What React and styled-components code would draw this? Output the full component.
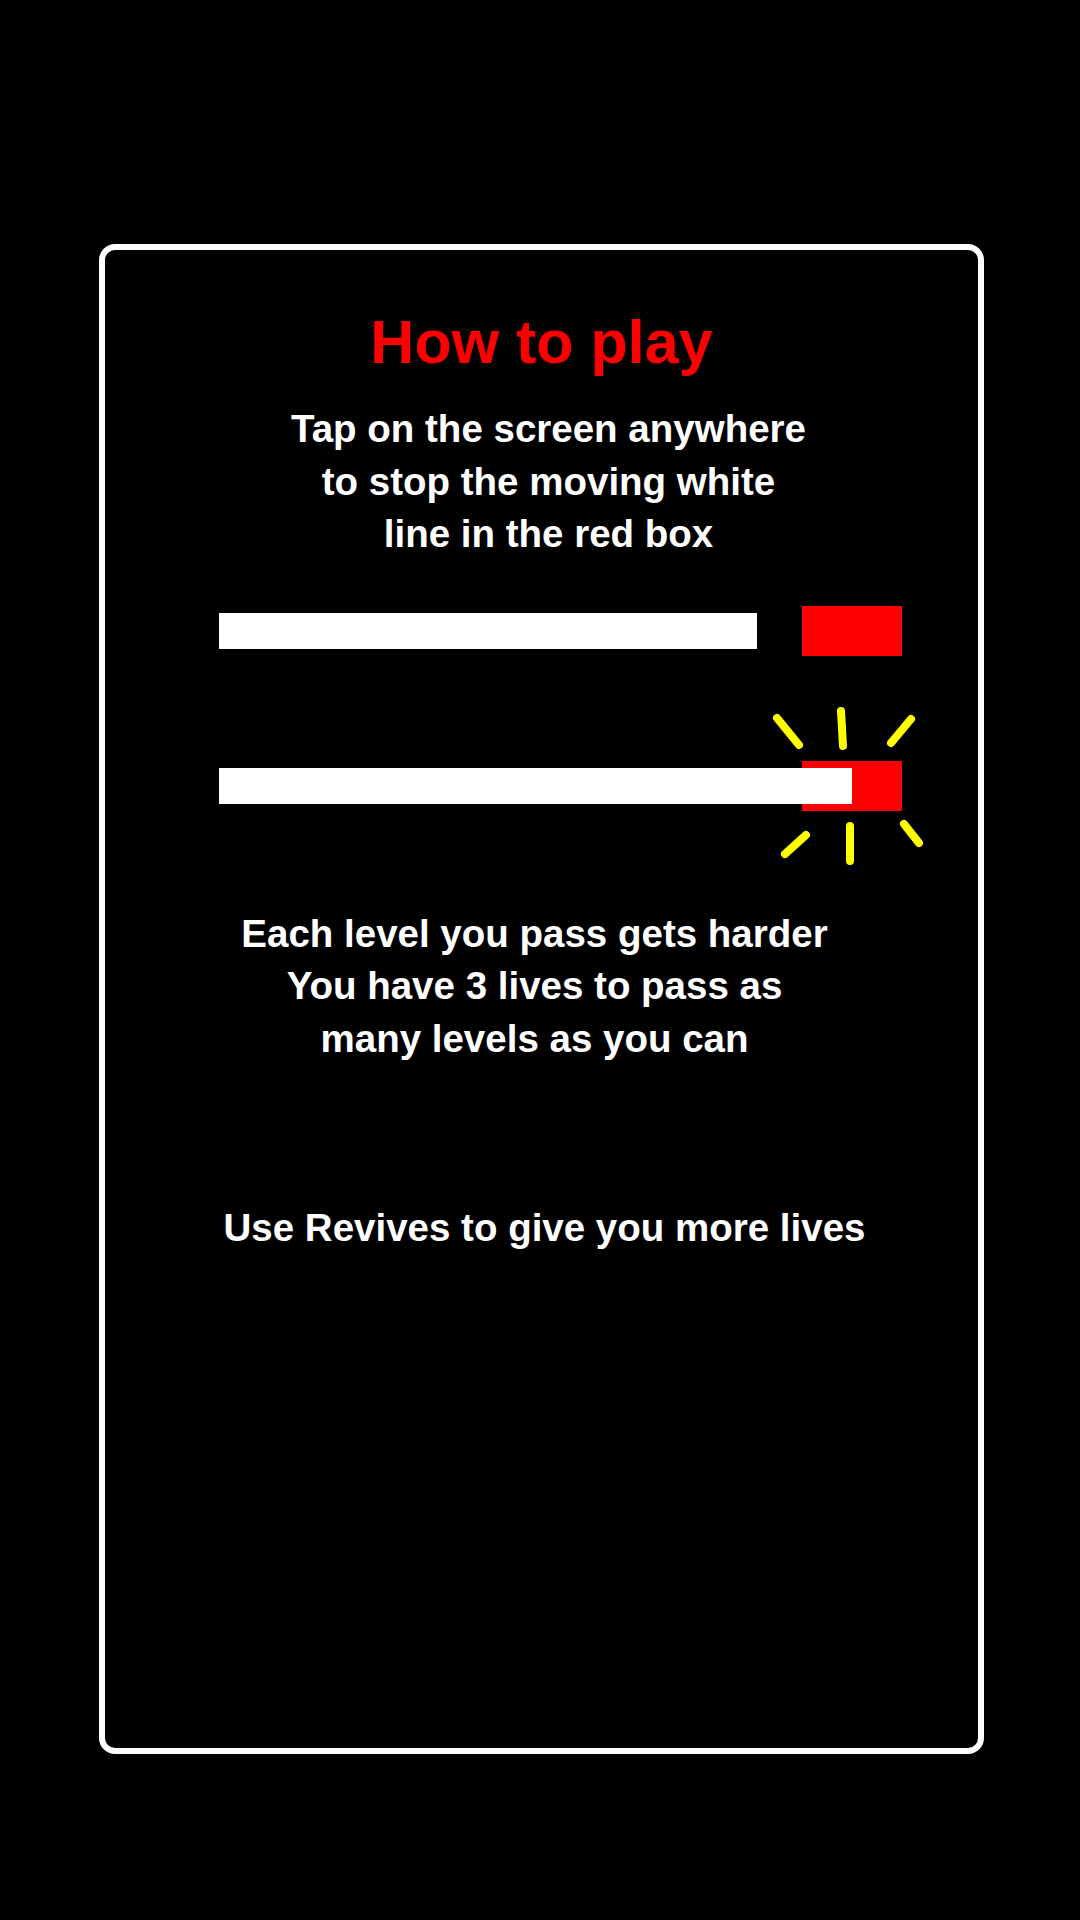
import React from "react";
import styled, { createGlobalStyle } from "styled-components";

const GlobalStyle = createGlobalStyle`
  html, body {
    margin: 0;
    padding: 0;
    background: #000000;
  }
  body {
    font-family: "Liberation Sans", Arial, sans-serif;
  }
`;

const Page = styled.main`
  width: 1080px;
  height: 1920px;
  box-sizing: border-box;
  padding: 244px 96px 0 99px;
  background: #000000;
`;

const Card = styled.section`
  box-sizing: border-box;
  width: 885px;
  height: 1510px;
  border: 6px solid #ffffff;
  border-radius: 16px;
  display: flex;
  flex-direction: column;
  padding-top: 57px;
`;

const Title = styled.h1`
  margin: 0;
  font-family: "Liberation Sans", Arial, sans-serif;
  font-weight: 700;
  font-size: 61px;
  line-height: 70px;
  color: #ff0000;
  text-align: center;
`;

const Body = styled.p`
  margin: ${(p) => p.$top}px 0 0;
  padding-left: ${(p) => Math.max(0, p.$offset * 2)}px;
  padding-right: ${(p) => Math.max(0, -p.$offset * 2)}px;
  font-family: "Liberation Sans", Arial, sans-serif;
  font-weight: 700;
  font-size: 38.5px;
  line-height: 52.5px;
  color: #ffffff;
  text-align: center;
`;

const Track = styled.div`
  position: relative;
  display: grid;
  grid-template-areas: "cell";
  align-items: center;
  width: 683px;
  height: 50px;
  margin: ${(p) => p.$top}px 0 0 114px;
`;

const Target = styled.div`
  grid-area: cell;
  justify-self: end;
  width: 100px;
  height: 50px;
  background: #ff0000;
`;

const Line = styled.div`
  grid-area: cell;
  justify-self: start;
  height: 36px;
  background: #ffffff;
`;

const Sparks = styled.svg`
  position: absolute;
  left: 551px;
  top: -56px;
  width: 160px;
  height: 165px;
  overflow: visible;
  pointer-events: none;
`;

const sparkLines = [
  [7, 13, 29, 40],
  [71, 6, 73, 41],
  [141, 14, 121, 38],
  [36, 130, 15, 149],
  [80, 121, 80, 156],
  [134, 119, 149, 138],
];

function Burst() {
  return (
    <Sparks viewBox="0 0 160 165">
      {sparkLines.map(([x1, y1, x2, y2], i) => (
        <line
          key={i}
          x1={x1}
          y1={y1}
          x2={x2}
          y2={y2}
          stroke="#ffff00"
          strokeWidth="8"
          strokeLinecap="round"
        />
      ))}
    </Sparks>
  );
}

export default function App() {
  return (
    <>
      <GlobalStyle />
      <Page>
        <Card>
          <Title>How to play</Title>
          <Body $top={26} $offset={7}>
            Tap on the screen anywhere
            <br />
            to stop the moving white
            <br />
            line in the red box
          </Body>
          <Track $top={45}>
            <Target />
            <Line style={{ width: 538 }} />
          </Track>
          <Track $top={105}>
            <Target />
            <Line style={{ width: 633 }} />
            <Burst />
          </Track>
          <Body $top={97} $offset={-7}>
            Each level you pass gets harder
            <br />
            You have 3 lives to pass as
            <br />
            many levels as you can
          </Body>
          <Body $top={137} $offset={3}>
            Use Revives to give you more lives
          </Body>
        </Card>
      </Page>
    </>
  );
}
